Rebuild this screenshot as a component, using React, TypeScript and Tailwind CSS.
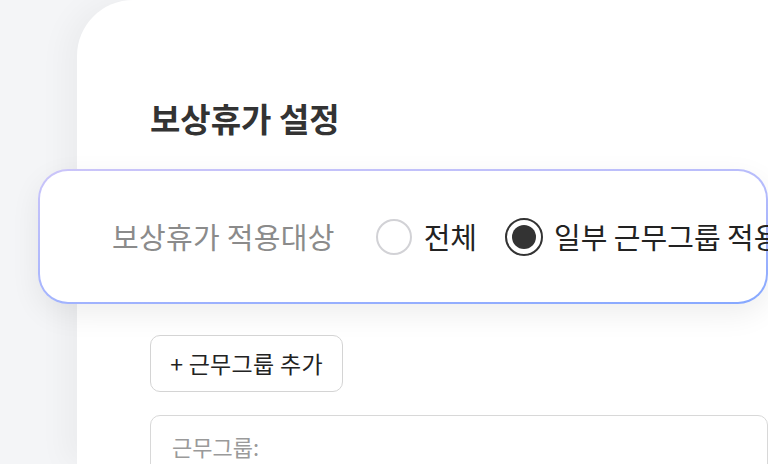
export default function App() {
  return (
    <div
      className="relative h-[464px] w-full overflow-hidden bg-[#f4f5f7]"
      style={{ fontFamily: '"Noto Sans CJK KR", "Noto Sans", sans-serif' }}
    >
      <div className="ml-[77px] h-full rounded-tl-[56px] bg-white pl-[73px] pt-[98px] shadow-[-12px_0_30px_rgba(0,0,0,0.04)]">
        <h1 className="text-[33px] font-bold leading-[40px] text-[#333]">보상휴가 설정</h1>

        <div className="-ml-[112px] mt-[31px] rounded-[30px] bg-[linear-gradient(175deg,#cbc5f9_0%,#a9b6fd_60%,#86a8ff_100%)] p-[2px] shadow-[0_10px_30px_rgba(0,0,0,0.07)]">
          <div className="flex h-[131px] items-center whitespace-nowrap rounded-[28px] bg-white pl-[72px]">
            <span className="text-[29px] tracking-[0.3px] text-[#8b8b8b]">보상휴가 적용대상</span>
            <label className="ml-[41px] flex items-center">
              <span className="h-[36px] w-[36px] rounded-full border-2 border-[#d2d2d6] bg-white" />
              <span className="ml-[12px] text-[29px] text-[#222]">전체</span>
            </label>
            <label className="ml-[28px] flex items-center">
              <span className="flex h-[38px] w-[38px] items-center justify-center rounded-full border-[2.5px] border-[#333]">
                <span className="h-[24px] w-[24px] rounded-full bg-[#333]" />
              </span>
              <span className="ml-[11px] text-[29px] text-[#222]">일부 근무그룹 적용</span>
            </label>
          </div>
        </div>

        <button className="mt-[31px] flex h-[57px] w-[193px] items-center justify-center rounded-[10px] border-[1.5px] border-[#d4d4d4] bg-white text-[23px] tracking-[0.3px] text-[#222]">
          + 근무그룹 추가
        </button>

        <div className="mt-[23px] h-[80px] rounded-[10px] border-[1.5px] border-[#d8d8d8] bg-white pl-[21px] pt-[14px]">
          <span className="text-[22px] text-[#9a9a9a]">근무그룹:</span>
        </div>
      </div>
    </div>
  );
}
